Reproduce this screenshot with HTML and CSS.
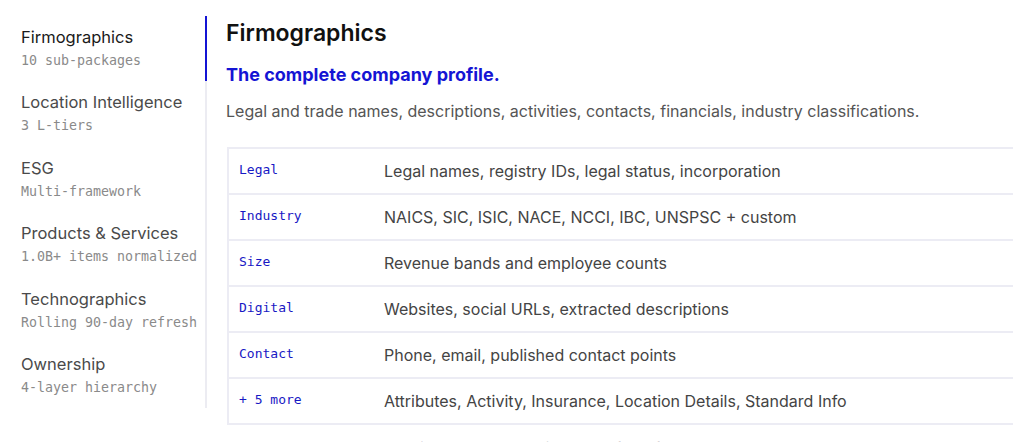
FILE: index.html
```html
<!DOCTYPE html>
<html lang="en">
<head>
  <meta charset="UTF-8">
  <title>Data Packages</title>
  <link rel="stylesheet" href="styles.css">
</head>
<body>

  <div class="layout">
    <nav class="sidebar">
      <div class="nav-item active">
        <div class="nav-title">Firmographics</div>
        <div class="nav-sub">10 sub-packages</div>
      </div>
      <div class="nav-item">
        <div class="nav-title">Location Intelligence</div>
        <div class="nav-sub">3 L-tiers</div>
      </div>
      <div class="nav-item">
        <div class="nav-title">ESG</div>
        <div class="nav-sub">Multi-framework</div>
      </div>
      <div class="nav-item">
        <div class="nav-title">Products &amp; Services</div>
        <div class="nav-sub">1.0B+ items normalized</div>
      </div>
      <div class="nav-item">
        <div class="nav-title">Technographics</div>
        <div class="nav-sub">Rolling 90-day refresh</div>
      </div>
      <div class="nav-item">
        <div class="nav-title">Ownership</div>
        <div class="nav-sub">4-layer hierarchy</div>
      </div>
    </nav>

    <main class="panel">
      <h1>Firmographics</h1>
      <h2>The complete company profile.</h2>
      <p class="lead">Legal and trade names, descriptions, activities, contacts, financials, industry classifications.</p>

      <table class="packages">
        <tbody>
          <tr><td class="key">Legal</td><td>Legal names, registry IDs, legal status, incorporation</td></tr>
          <tr><td class="key">Industry</td><td>NAICS, SIC, ISIC, NACE, NCCI, IBC, UNSPSC + custom</td></tr>
          <tr><td class="key">Size</td><td>Revenue bands and employee counts</td></tr>
          <tr><td class="key">Digital</td><td>Websites, social URLs, extracted descriptions</td></tr>
          <tr><td class="key">Contact</td><td>Phone, email, published contact points</td></tr>
          <tr><td class="key">+ 5 more</td><td>Attributes, Activity, Insurance, Location Details, Standard Info</td></tr>
        </tbody>
      </table>

      <p class="note">Use any sub-package on its own, or combine them for a full record.</p>
    </main>
  </div>

</body>
</html>
```

FILE: styles.css
```css
body {
  margin: 0;
  font-family: Inter, "Open Sans", sans-serif;
  background-color: #fff;
  color: #444;
  overflow: hidden;
}
.layout {
  display: flex;
  padding-top: 16px;
}
.sidebar {
  flex: 0 0 205px;
  align-self: flex-start;
  border-right: 2px solid #ececf2;
}
.nav-item {
  padding: 10px 0 11px 21px;
  margin-right: -2px;
  border-right: 2px solid transparent;
  height: 44.4px;
}
.nav-item.active {
  border-right-color: #1414d4;
}
.nav-title {
  font-size: 16.5px;
  line-height: 22px;
  color: #4a4a4a;
}
.nav-item.active .nav-title {
  color: #1a1a1a;
}
.nav-sub {
  margin-top: 4px;
  font-family: "DejaVu Sans Mono", monospace;
  font-size: 13.3px;
  line-height: 18px;
  color: #8a8a8a;
}
.panel {
  flex: 0 0 auto;
  margin-left: 19px;
}
h1 {
  margin: 2px 0 0;
  font-size: 23px;
  line-height: 30px;
  font-weight: 600;
  color: #111;
}
h2 {
  margin: 15px 0 0;
  font-size: 18px;
  line-height: 24px;
  font-weight: 700;
  color: #1414d4;
}
.lead {
  margin: 12px 0 0;
  font-size: 16px;
  line-height: 24px;
  color: #555;
}
.packages {
  margin-top: 24px;
  margin-left: 1px;
  width: 860px;
  border-collapse: collapse;
}
.packages td {
  height: 44px;
  padding: 0 10px;
  border: 2px solid #ececf4;
  font-size: 16px;
  color: #444;
  vertical-align: middle;
}
.packages td.key {
  width: 125px;
  height: 40px;
  padding-bottom: 4px;
  font-family: "DejaVu Sans Mono", monospace;
  font-size: 13px;
  color: #1818c4;
  border-right: none;
}
.packages td + td {
  border-left: none;
}
.note {
  margin: 12px 0 0;
  font-size: 16px;
  line-height: 22px;
  color: #666;
}
```
